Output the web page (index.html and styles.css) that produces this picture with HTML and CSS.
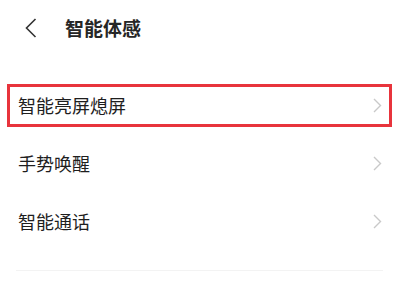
FILE: index.html
```html
<!DOCTYPE html>
<html lang="zh-CN">
<head>
<meta charset="utf-8">
<link rel="stylesheet" href="styles.css">
</head>
<body>
<div class="page">
  <header class="header">
    <svg class="back" width="12" height="20" viewBox="0 0 12 20"><polyline points="10.5,1 1.5,10 10.5,19" fill="none" stroke="#333" stroke-width="1.6" stroke-linejoin="miter"/></svg>
    <h1 class="title">智能体感</h1>
  </header>
  <ul class="list">
    <li class="item highlight"><span class="label">智能亮屏熄屏</span><svg class="arrow" width="9" height="15" viewBox="0 0 9 15"><polyline points="1,1 7.5,7.5 1,14" fill="none" stroke="#c9c9c9" stroke-width="1.4"/></svg></li>
    <li class="item"><span class="label">手势唤醒</span><svg class="arrow" width="9" height="15" viewBox="0 0 9 15"><polyline points="1,1 7.5,7.5 1,14" fill="none" stroke="#c9c9c9" stroke-width="1.4"/></svg></li>
    <li class="item"><span class="label">智能通话</span><svg class="arrow" width="9" height="15" viewBox="0 0 9 15"><polyline points="1,1 7.5,7.5 1,14" fill="none" stroke="#c9c9c9" stroke-width="1.4"/></svg></li>
  </ul>
  <div class="divider"></div>
</div>
</body>
</html>
```
FILE: styles.css
```css
html, body {
  margin: 0;
  padding: 0;
  background: #ffffff;
}
body {
  font-family: "Noto Sans CJK SC", "Noto Sans", sans-serif;
  color: #222222;
}
.page {
  width: 400px;
  height: 300px;
  overflow: hidden;
}
.header {
  height: 54px;
  display: flex;
  align-items: center;
  padding-left: 25px;
}
.back {
  display: block;
  margin-top: 1px;
}
.title {
  margin: 0 0 0 28px;
  font-size: 19px;
  font-weight: 700;
  color: #262626;
  line-height: 1;
}
.list {
  list-style: none;
  margin: 22px 0 0 0;
  padding: 0;
}
.item {
  position: relative;
  height: 58px;
  display: flex;
  align-items: center;
  justify-content: space-between;
  padding: 0 18px 0 18px;
}
.label {
  font-size: 18px;
  line-height: 1;
  color: #1e1e1e;
}
.arrow {
  display: block;
}
.highlight::after {
  content: "";
  position: absolute;
  left: 7px;
  right: 8px;
  top: 8px;
  bottom: 7px;
  border: 3px solid #e8343c;
}
.divider {
  margin: 20px 17px 0 16px;
  height: 1px;
  background: #f3f3f3;
}
```
